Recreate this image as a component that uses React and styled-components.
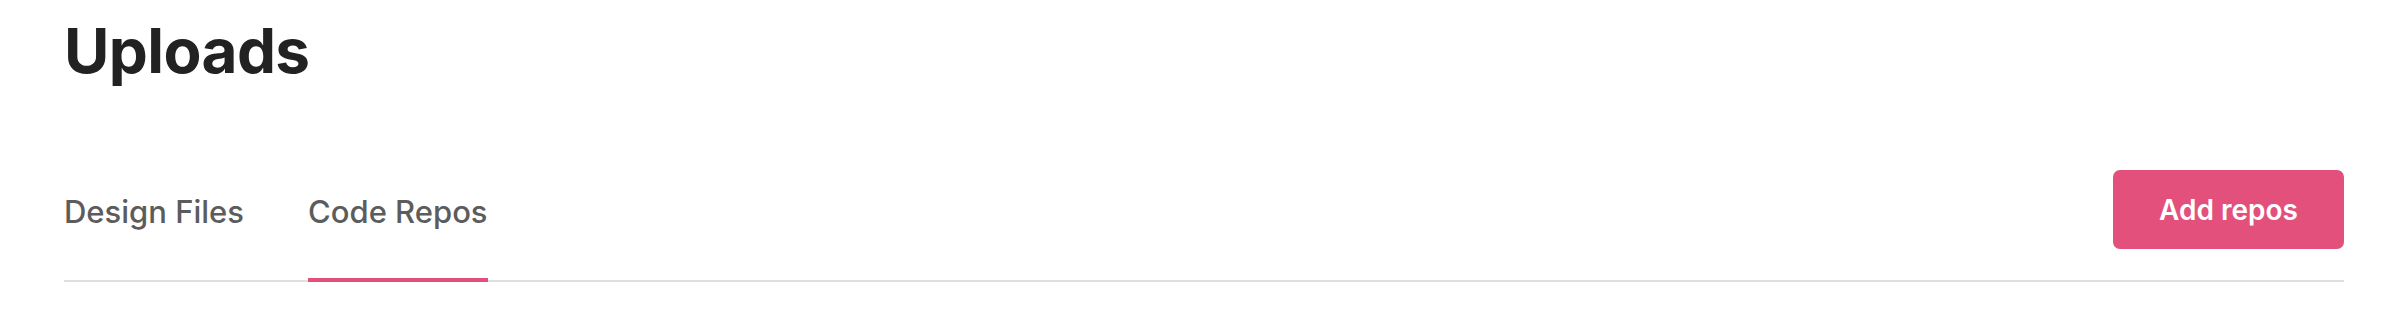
import React, { useState } from "react";
import styled, { createGlobalStyle } from "styled-components";

const GlobalStyle = createGlobalStyle`
  body {
    margin: 0;
    background: #fff;
    font-family: Inter, "Liberation Sans", sans-serif;
  }
`;

const Page = styled.div`
  padding: 13px 44px 0 64px;
`;

const Title = styled.h1`
  margin: 0;
  font-size: 62px;
  line-height: 76px;
  font-weight: 700;
  color: #222;
  letter-spacing: -0.6px;
`;

const TabBar = styled.div`
  margin-top: 81px;
  display: flex;
  justify-content: space-between;
  align-items: flex-start;
  box-shadow: inset 0 -2px 0 #e0e0e0;
`;

const TabList = styled.div`
  display: flex;
  gap: 64px;
`;

const Tab = styled.div`
  padding: 24px 0 48px;
  font-size: 31px;
  line-height: 36px;
  font-weight: 500;
  color: #5c5c5c;
  border-bottom: 4px solid ${(props) => (props.active ? "#e2507b" : "transparent")};
  cursor: pointer;
`;

const AddButton = styled.button`
  width: 231px;
  height: 79px;
  border: none;
  border-radius: 7px;
  background-color: #e2507b;
  color: #fff;
  font-family: Inter, "Liberation Sans", sans-serif;
  font-size: 28px;
  font-weight: 600;
  cursor: pointer;
`;

const App = () => {
  const [tab, setTab] = useState("code");
  return (
    <>
      <GlobalStyle />
      <Page>
        <Title>Uploads</Title>
        <TabBar>
          <TabList>
            <Tab active={tab === "design"} onClick={() => setTab("design")}>
              Design Files
            </Tab>
            <Tab active={tab === "code"} onClick={() => setTab("code")}>
              Code Repos
            </Tab>
          </TabList>
          <AddButton>Add repos</AddButton>
        </TabBar>
      </Page>
    </>
  );
};

export default App;
